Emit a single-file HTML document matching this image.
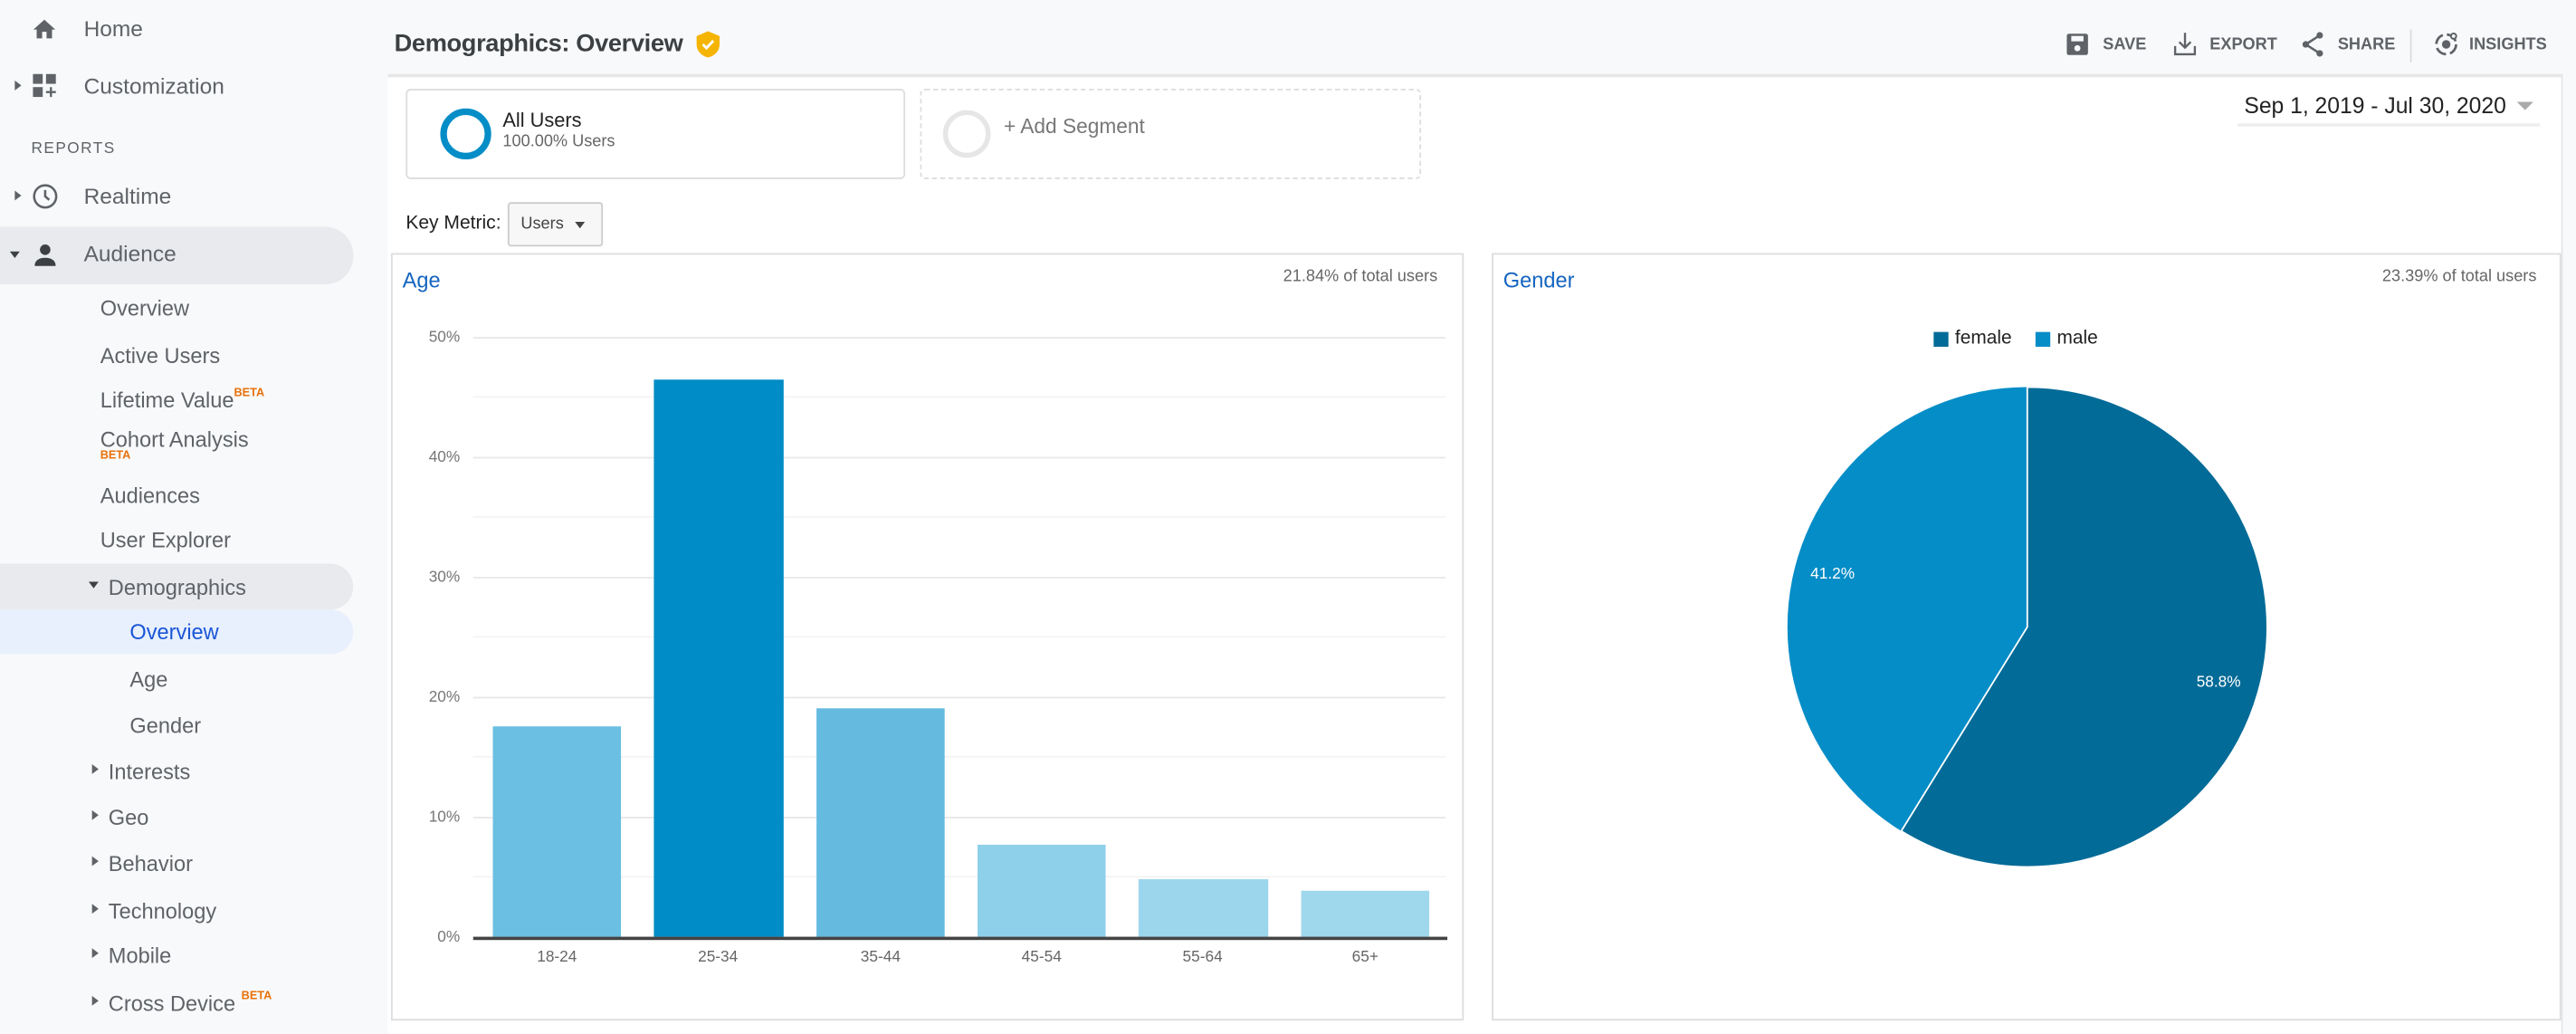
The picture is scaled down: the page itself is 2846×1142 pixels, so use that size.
<!DOCTYPE html>
<html><head><meta charset="utf-8">
<style>
*{margin:0;padding:0;box-sizing:border-box}
html,body{width:2846px;height:1142px;overflow:hidden;background:#f8f9fa}
#w{position:absolute;left:0;top:0;width:1568px;height:629px;transform:scale(1.81505);transform-origin:0 0;font-family:"Liberation Sans",sans-serif;color:#5f6368}
.a{position:absolute;white-space:nowrap}
.si{font-size:13px;color:#5f6368}
.top{font-size:13.5px;color:#5f6368}
.beta{font-size:7px;color:#e8710a;font-weight:bold;position:relative;top:-7px}
.tri-r{position:absolute;width:0;height:0;border-top:3.5px solid transparent;border-bottom:3.5px solid transparent;border-left:4px solid #5f6368}
.tri-d{position:absolute;width:0;height:0;border-left:3.5px solid transparent;border-right:3.5px solid transparent;border-top:4px solid #3c4043}
.tb{font-size:10px;font-weight:bold;color:#5f6368}
.yl{position:absolute;left:240px;width:40px;text-align:right;font-size:9.5px;color:#777}
.gl{position:absolute;left:288px;width:592px;height:1px;background:#e8e8e8}
.gm{position:absolute;left:288px;width:592px;height:1px;background:#f4f4f4}
.xl{position:absolute;top:577px;font-size:9.5px;color:#666;width:80px;text-align:center}
</style></head><body><div id="w">
<!-- sidebar -->
<div class="a" style="left:0;top:138px;width:215px;height:35px;background:#e8eaed;border-radius:0 17px 17px 0"></div>
<div class="a" style="left:0;top:343px;width:215px;height:28px;background:#e8eaed;border-radius:0 14px 14px 0"></div>
<div class="a" style="left:0;top:371px;width:215px;height:27px;background:#e8f0fe;border-radius:0 14px 14px 0"></div>
<svg class="a" style="left:19px;top:10px" width="16" height="16" viewBox="0 0 24 24"><path d="M10 20v-6h4v6h5v-8h3L12 3 2 12h3v8z" fill="#5f6368"/></svg>
<div class="a top" style="left:51px;top:10px">Home</div>
<div class="tri-r" style="left:9px;top:49px"></div>
<svg class="a" style="left:20px;top:45px" width="16" height="16" viewBox="0 0 16 16"><rect x="0" y="0" width="6" height="6" fill="#5f6368"/><rect x="8" y="0" width="6" height="6" fill="#5f6368"/><rect x="0" y="8" width="6" height="6" fill="#5f6368"/><path d="M11 8v6M8 11h6" stroke="#5f6368" stroke-width="1.3"/></svg>
<div class="a top" style="left:51px;top:45px">Customization</div>
<div class="a" style="left:19px;top:85px;font-size:9.5px;letter-spacing:.8px;color:#5f6368">REPORTS</div>
<div class="tri-r" style="left:9px;top:116px"></div>
<svg class="a" style="left:19px;top:111px" width="17" height="17" viewBox="0 0 24 24"><circle cx="12" cy="12" r="9.5" fill="none" stroke="#5f6368" stroke-width="2"/><path d="M12 6.5V12l3.5 3" fill="none" stroke="#5f6368" stroke-width="2"/></svg>
<div class="a top" style="left:51px;top:112px">Realtime</div>
<div class="tri-d" style="left:6px;top:153px"></div>
<svg class="a" style="left:19px;top:147px" width="17" height="17" viewBox="0 0 24 24"><circle cx="12" cy="7" r="4.5" fill="#3c4043"/><path d="M3 21c0-5 4-7 9-7s9 2 9 7z" fill="#3c4043"/></svg>
<div class="a top" style="left:51px;top:147px">Audience</div>
<div class="a si" style="left:61px;top:180px">Overview</div>
<div class="a si" style="left:61px;top:209px">Active Users</div>
<div class="a si" style="left:61px;top:236px">Lifetime Value<span class="beta">BETA</span></div>
<div class="a si" style="left:61px;top:260px">Cohort Analysis</div>
<div class="a" style="left:61px;top:274px;font-size:7px;color:#e8710a;font-weight:bold">BETA</div>
<div class="a si" style="left:61px;top:294px">Audiences</div>
<div class="a si" style="left:61px;top:321px">User Explorer</div>
<div class="tri-d" style="left:54px;top:354px"></div>
<div class="a si" style="left:66px;top:350px">Demographics</div>
<div class="a si" style="left:79px;top:377px;color:#1a56d6">Overview</div>
<div class="a si" style="left:79px;top:406px">Age</div>
<div class="a si" style="left:79px;top:434px">Gender</div>
<div class="tri-r" style="left:56px;top:465px"></div><div class="a si" style="left:66px;top:462px">Interests</div>
<div class="tri-r" style="left:56px;top:493px"></div><div class="a si" style="left:66px;top:490px">Geo</div>
<div class="tri-r" style="left:56px;top:521px"></div><div class="a si" style="left:66px;top:518px">Behavior</div>
<div class="tri-r" style="left:56px;top:550px"></div><div class="a si" style="left:66px;top:547px">Technology</div>
<div class="tri-r" style="left:56px;top:577px"></div><div class="a si" style="left:66px;top:574px">Mobile</div>
<div class="tri-r" style="left:56px;top:606px"></div><div class="a si" style="left:66px;top:603px">Cross Device <span class="beta">BETA</span></div>

<!-- header -->
<div class="a" style="left:240px;top:18px;font-size:15px;font-weight:bold;color:#3c4043;letter-spacing:-0.2px">Demographics: Overview</div>
<svg class="a" style="left:424px;top:19px" width="14" height="16" viewBox="0 0 14 16"><path d="M7 0L0 3v5c0 4 3 7 7 8 4-1 7-4 7-8V3z" fill="#f4b400"/><path d="M3.8 8l2.2 2.2 4.2-4.4" fill="none" stroke="#fff" stroke-width="1.6"/></svg>
<svg class="a" style="left:1258px;top:20px" width="13" height="14" viewBox="0 0 14 14"><rect x="0" y="0" width="14" height="14" rx="1.5" fill="#5f6368"/><rect x="3" y="1.5" width="8" height="3.5" fill="#f8f9fa"/><circle cx="7" cy="9.5" r="2" fill="#f8f9fa"/></svg>
<div class="a tb" style="left:1280px;top:22px">SAVE</div>
<svg class="a" style="left:1323px;top:19px" width="14" height="15" viewBox="0 0 14 15"><path d="M7 1v9M3.5 6.5L7 10l3.5-3.5M1 9v5h12V9" fill="none" stroke="#5f6368" stroke-width="1.3"/></svg>
<div class="a tb" style="left:1345px;top:22px">EXPORT</div>
<svg class="a" style="left:1401px;top:19px" width="14" height="16" viewBox="0 0 14 16"><circle cx="11" cy="2.5" r="2" fill="#5f6368"/><circle cx="2.5" cy="8" r="2" fill="#5f6368"/><circle cx="11" cy="13.5" r="2" fill="#5f6368"/><path d="M11 2.5L2.5 8 11 13.5" fill="none" stroke="#5f6368" stroke-width="1.4"/></svg>
<div class="a tb" style="left:1423px;top:22px">SHARE</div>
<div class="a" style="left:1467px;top:18px;width:1px;height:20px;background:#dadce0"></div>
<svg class="a" style="left:1481px;top:19px" width="16" height="16" viewBox="0 0 16 16"><circle cx="8" cy="8" r="6" fill="none" stroke="#5f6368" stroke-width="1.5" stroke-dasharray="7 2.5"/><circle cx="8" cy="8" r="2.6" fill="#5f6368"/><circle cx="12.5" cy="3" r="1.6" fill="#f8f9fa" stroke="#5f6368" stroke-width="1.1"/></svg>
<div class="a tb" style="left:1503px;top:22px">INSIGHTS</div>

<!-- main -->
<div class="a" style="left:236px;top:45px;width:1324px;height:584px;background:#fff;border-top:2px solid #e6e6e6;border-right:1px solid #e6e6e6"></div>
<div class="a" style="left:247px;top:54px;width:304px;height:55px;border:1px solid #ddd;border-radius:3px;background:#fff"></div>
<div class="a" style="left:268px;top:66px;width:31px;height:31px;border:4px solid #058dc7;border-radius:50%"></div>
<div class="a" style="left:306px;top:66px;font-size:12px;color:#222">All Users</div>
<div class="a" style="left:306px;top:81px;font-size:10px;color:#666">100.00% Users</div>
<div class="a" style="left:560px;top:54px;width:305px;height:55px;border:1px dashed #ddd;border-radius:3px"></div>
<div class="a" style="left:574px;top:67px;width:29px;height:29px;border:3px solid #e6e6e6;border-radius:50%"></div>
<div class="a" style="left:611px;top:70px;font-size:12.5px;color:#777">+ Add Segment</div>
<div class="a" style="left:1366px;top:57px;font-size:13.6px;color:#222">Sep 1, 2019 - Jul 30, 2020</div>
<div class="tri-d" style="left:1532px;top:62px;border-left-width:5px;border-right-width:5px;border-top:5px solid #aaa"></div>
<div class="a" style="left:1362px;top:75px;width:184px;height:2px;background:#eee"></div>
<div class="a" style="left:247px;top:129px;font-size:11.6px;color:#222">Key Metric:</div>
<div class="a" style="left:309px;top:123px;width:58px;height:27px;border:1px solid #ccc;border-radius:2px;background:#f7f7f7"></div>
<div class="a" style="left:317px;top:131px;font-size:10px;color:#444">Users</div>
<div class="tri-d" style="left:350px;top:135px;border-left-width:3px;border-right-width:3px;border-top:4px solid #444"></div>

<!-- age panel -->
<div class="a" style="left:238px;top:154px;width:653px;height:467px;border:1px solid #ddd;background:#fff"></div>
<div class="a" style="left:245px;top:163px;font-size:13px;color:#1565c0">Age</div>
<div class="a" style="left:760px;top:163px;font-size:10px;color:#666;width:115px;text-align:right">21.84% of total users</div>
<div class="gl" style="top:205px"></div><div class="gm" style="top:241px"></div>
<div class="gl" style="top:278px"></div><div class="gm" style="top:314px"></div>
<div class="gl" style="top:351px"></div><div class="gm" style="top:387px"></div>
<div class="gl" style="top:424px"></div><div class="gm" style="top:460px"></div>
<div class="gl" style="top:497px"></div><div class="gm" style="top:533px"></div>
<div class="yl" style="top:200px">50%</div><div class="yl" style="top:273px">40%</div><div class="yl" style="top:346px">30%</div><div class="yl" style="top:419px">20%</div><div class="yl" style="top:492px">10%</div><div class="yl" style="top:565px">0%</div>
<div class="a" style="left:300px;top:442px;width:78px;height:128px;background:#6abfe2"></div>
<div class="a" style="left:398px;top:231px;width:79px;height:339px;background:#008cc6"></div>
<div class="a" style="left:497px;top:431px;width:78px;height:139px;background:#64bbdf"></div>
<div class="a" style="left:595px;top:514px;width:78px;height:56px;background:#8ed0ea"></div>
<div class="a" style="left:693px;top:535px;width:79px;height:35px;background:#9bd6ed"></div>
<div class="a" style="left:792px;top:542px;width:78px;height:28px;background:#9fd8ed"></div>
<div class="a" style="left:288px;top:570px;width:593px;height:1.5px;background:#444"></div>
<div class="xl" style="left:299px">18-24</div><div class="xl" style="left:397px">25-34</div><div class="xl" style="left:496px">35-44</div><div class="xl" style="left:594px">45-54</div><div class="xl" style="left:692px">55-64</div><div class="xl" style="left:791px">65+</div>

<!-- gender panel -->
<div class="a" style="left:908px;top:154px;width:651px;height:467px;border:1px solid #ddd;background:#fff"></div>
<div class="a" style="left:915px;top:163px;font-size:13px;color:#1565c0">Gender</div>
<div class="a" style="left:1430px;top:163px;font-size:10px;color:#666;width:114px;text-align:right">23.39% of total users</div>
<div class="a" style="left:1177px;top:202px;width:9px;height:9px;background:#026b97"></div>
<div class="a" style="left:1190px;top:200px;font-size:11.5px;color:#222">female</div>
<div class="a" style="left:1239px;top:202px;width:9px;height:9px;background:#058dc7"></div>
<div class="a" style="left:1252px;top:200px;font-size:11.5px;color:#222">male</div>
<svg class="a" style="left:1080px;top:228px" width="310" height="310" viewBox="1080 228 310 310">
<circle cx="1234" cy="381.5" r="146" fill="#058dc7"/>
<path d="M1234 381.5V235.5A146 146 0 1 1 1157.3 505.7Z" fill="#036b97" stroke="#fff" stroke-width="1"/>
<text x="1102" y="352" font-family="Liberation Sans,sans-serif" font-size="9.5" fill="#fff">41.2%</text>
<text x="1337" y="418" font-family="Liberation Sans,sans-serif" font-size="9.5" fill="#fff">58.8%</text>
</svg>
</div></body></html>
